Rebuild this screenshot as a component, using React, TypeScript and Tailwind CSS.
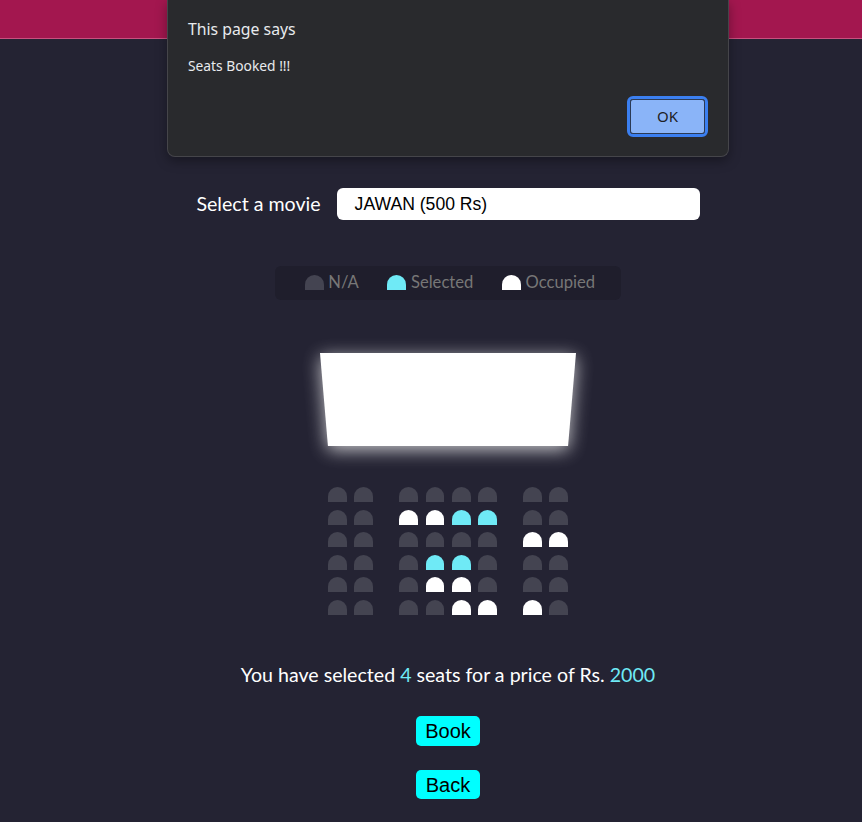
import React from "react";

type Seat = "n" | "s" | "o";

const rows: Seat[][] = [
  ["n", "n", "n", "n", "n", "n", "n", "n"],
  ["n", "n", "o", "o", "s", "s", "n", "n"],
  ["n", "n", "n", "n", "n", "n", "o", "o"],
  ["n", "n", "n", "s", "s", "n", "n", "n"],
  ["n", "n", "n", "o", "o", "n", "n", "n"],
  ["n", "n", "n", "n", "o", "o", "o", "n"],
];

const seatColor: Record<Seat, string> = {
  n: "bg-[#444451]",
  s: "bg-[#6feaf6]",
  o: "bg-white",
};

const SeatBox = ({ kind, extra = "" }: { kind: Seat; extra?: string }) => (
  <div
    className={`w-[18.75px] h-[15px] my-[3.75px] rounded-t-[12.5px] ${seatColor[kind]} ${extra}`}
  ></div>
);

const App = () => {
  return (
    <div className="relative min-h-screen bg-[#242333] text-white font-['Lato','Liberation_Sans',sans-serif]">
      {/* Top bar */}
      <div className="h-[39px] bg-[#a3174f] border-b border-[#c8507f]"></div>

      <div className="flex flex-col items-center pl-[34px]">
        {/* Movie picker */}
        <div className="mt-[149px] flex items-center h-[32px]">
          <span className="text-[19.6px] mr-[16px]">Select a movie</span>
          <div className="w-[363px] h-[32px] bg-white rounded-[6px] flex items-center pl-[18px] text-black text-[17.6px] font-['Liberation_Sans',Arial,sans-serif]">
            JAWAN (500 Rs)
          </div>
        </div>

        {/* Legend */}
        <ul className="mt-[46px] h-[34px] flex items-center px-[14px] bg-[#1f1e2c] rounded-[6px] text-[#777777]">
          <li className="flex items-center mx-[12.5px]">
            <SeatBox kind="n" extra="mx-[3.75px]" />
            <small className="text-[16.6px] ml-[1px] -mt-[2px]">N/A</small>
          </li>
          <li className="flex items-center mx-[12.5px]">
            <SeatBox kind="s" extra="mx-[3.75px]" />
            <small className="text-[16.6px] ml-[1px] -mt-[2px]">Selected</small>
          </li>
          <li className="flex items-center mx-[12.5px]">
            <SeatBox kind="o" extra="mx-[3.75px]" />
            <small className="text-[16.6px] ml-[1px] -mt-[2px]">Occupied</small>
          </li>
        </ul>

        {/* Screen */}
        <div className="mt-[53px] drop-shadow-[0_4px_9px_rgba(255,255,255,0.75)]">
          <div className="w-[256px] h-[93px] bg-white [clip-path:polygon(0_0,100%_0,96.9%_100%,3.1%_100%)]"></div>
        </div>

        {/* Seats */}
        <div className="mt-[37.25px] flex flex-col">
          {rows.map((row, r) => (
            <div key={r} className="flex">
              {row.map((s, i) => (
                <SeatBox
                  key={i}
                  kind={s}
                  extra={
                    i === 1
                      ? "ml-[3.75px] mr-[22.5px]"
                      : i === 6
                      ? "ml-[22.5px] mr-[3.75px]"
                      : "mx-[3.75px]"
                  }
                />
              ))}
            </div>
          ))}
        </div>

        <p className="mt-[44.75px] text-[19.6px] leading-[24px]">
          You have selected <span className="text-[#6feaf6]">4</span> seats for a price of Rs.{" "}
          <span className="text-[#6feaf6]">2000</span>
        </p>

        <button className="mt-[29px] w-[64px] h-[30px] bg-[#00ffff] rounded-[5px] text-black text-[20px] font-['Liberation_Sans',Arial,sans-serif] flex items-center justify-center">
          Book
        </button>
        <button className="mt-[24px] w-[64px] h-[29px] bg-[#00ffff] rounded-[5px] text-black text-[20px] font-['Liberation_Sans',Arial,sans-serif] flex items-center justify-center">
          Back
        </button>
      </div>

      {/* Browser alert overlay */}
      <div className="absolute left-[167px] top-0 w-[562px] h-[157px] bg-[#292a2d] border border-t-0 border-[#45454a] rounded-b-[8px] shadow-[0_4px_12px_rgba(0,0,0,0.35)] font-['Noto_Sans','Open_Sans',sans-serif]">
        <div className="pl-[20px] pt-[16px] text-[15.8px] leading-[26px] text-[#e8eaed]">This page says</div>
        <div className="pl-[20px] pt-[14px] text-[13.8px] leading-[20px] text-[#e8eaed]">Seats Booked !!!</div>
        <div className="flex justify-end pr-[20px] mt-[20px]">
          <button className="w-[81px] h-[41px] rounded-[6px] border-[3px] border-[#3b7ff0] p-0">
            <div className="w-full h-full rounded-[3px] border border-[#2b3a55] bg-[#8ab4f8] flex items-center justify-center text-[#202124] text-[15px]">
              OK
            </div>
          </button>
        </div>
      </div>
    </div>
  );
};

export default App;
